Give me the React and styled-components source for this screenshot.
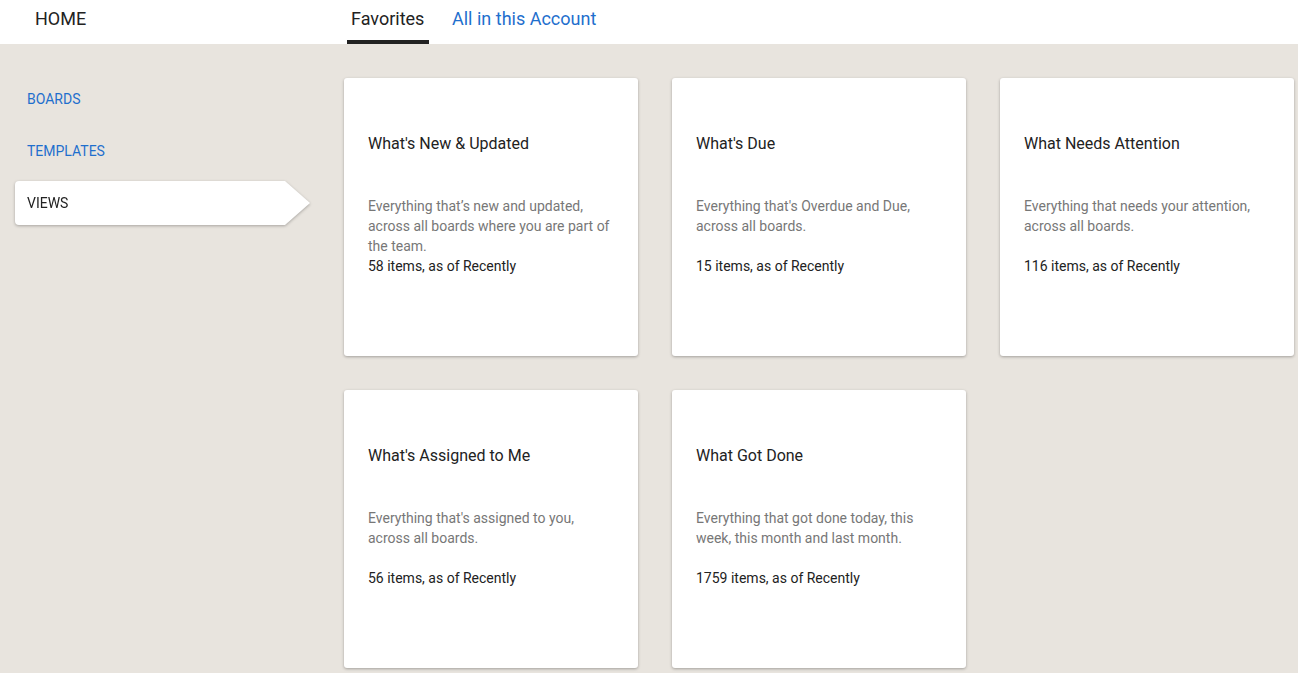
import React from "react";
import styled, { createGlobalStyle } from "styled-components";

const Global = createGlobalStyle`
  html, body { margin: 0; padding: 0; }
  body {
    background: #e8e4de;
    font-family: Roboto, "Noto Sans", "Liberation Sans", sans-serif;
    color: #222;
    -webkit-font-smoothing: antialiased;
  }
  * { box-sizing: border-box; }
`;

const Page = styled.div`
  min-height: 673px;
  display: flex;
  flex-direction: column;
`;

const Header = styled.header`
  height: 44px;
  background: #fff;
  display: flex;
  align-items: stretch;
`;

const Home = styled.div`
  width: 347px;
  padding-left: 35px;
  font-size: 18px;
  line-height: 38px;
  color: #222;
`;

const Tabs = styled.nav`
  display: flex;
  gap: 19px;
`;

const Tab = styled.div`
  padding: 0 4px 0 4px;
  min-width: ${(p) => (p.$active ? "82px" : "auto")};
  font-size: 18px;
  line-height: 38px;
  color: ${(p) => (p.$active ? "#222" : "#1f6fcd")};
  border-bottom: 4px solid ${(p) => (p.$active ? "#222" : "transparent")};
  height: 44px;
`;

const Body = styled.div`
  display: flex;
  flex: 1;
`;

const Sidebar = styled.aside`
  width: 344px;
  flex: none;
  padding: 33px 0 0 15px;
  display: flex;
  flex-direction: column;
  gap: 8px;
`;

const NavItem = styled.div`
  height: 44px;
  width: 295px;
  padding-left: 12px;
  display: flex;
  align-items: center;
  font-size: 14px;
  color: #1f6fcd;
  text-transform: uppercase;
`;

const ActiveWrap = styled.div`
  filter: drop-shadow(0 1.5px 1.5px rgba(0, 0, 0, 0.28));
`;

const ActiveItem = styled(NavItem)`
  background: #fff;
  color: #222;
  border-radius: 4px 0 0 4px;
  clip-path: polygon(0 0, calc(100% - 25px) 0, 100% 50%, calc(100% - 25px) 100%, 0 100%);
`;

const Main = styled.main`
  flex: 1;
  padding-top: 34px;
  display: grid;
  grid-template-columns: repeat(3, 294px);
  grid-auto-rows: 278px;
  gap: 34px;
  align-content: start;
`;

const Card = styled.div`
  background: #fff;
  border-radius: 3px;
  box-shadow: 0 1px 3px rgba(0, 0, 0, 0.3);
  padding: 56px 24px 0 24px;
`;

const Title = styled.div`
  font-size: 16px;
  line-height: 20px;
  color: #222;
`;

const Desc = styled.div`
  margin-top: 42px;
  min-height: 60px;
  font-size: 14px;
  line-height: 20px;
  color: #777;
`;

const Count = styled.div`
  font-size: 14px;
  line-height: 20px;
  color: #222;
`;

const cards = [
  {
    title: "What's New & Updated",
    desc: "Everything that’s new and updated, across all boards where you are part of the team.",
    count: "58 items, as of Recently",
  },
  {
    title: "What's Due",
    desc: "Everything that's Overdue and Due, across all boards.",
    count: "15 items, as of Recently",
  },
  {
    title: "What Needs Attention",
    desc: "Everything that needs your attention, across all boards.",
    count: "116 items, as of Recently",
  },
  {
    title: "What's Assigned to Me",
    desc: "Everything that's assigned to you, across all boards.",
    count: "56 items, as of Recently",
  },
  {
    title: "What Got Done",
    desc: "Everything that got done today, this week, this month and last month.",
    count: "1759 items, as of Recently",
  },
];

export default function App() {
  return (
    <>
      <Global />
      <Page>
        <Header>
          <Home>HOME</Home>
          <Tabs>
            <Tab $active>Favorites</Tab>
            <Tab>All in this Account</Tab>
          </Tabs>
        </Header>
        <Body>
          <Sidebar>
            <NavItem>Boards</NavItem>
            <NavItem>Templates</NavItem>
            <ActiveWrap>
              <ActiveItem>Views</ActiveItem>
            </ActiveWrap>
          </Sidebar>
          <Main>
            {cards.map((c) => (
              <Card key={c.title}>
                <Title>{c.title}</Title>
                <Desc>{c.desc}</Desc>
                <Count>{c.count}</Count>
              </Card>
            ))}
          </Main>
        </Body>
      </Page>
    </>
  );
}
